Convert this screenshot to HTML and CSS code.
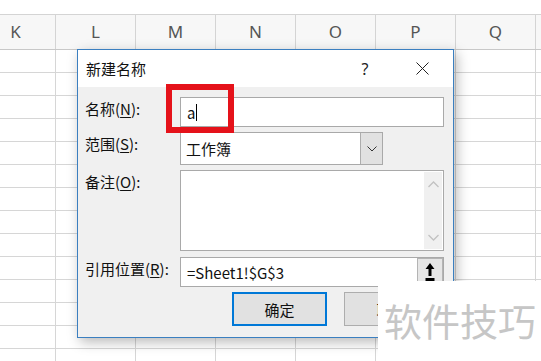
FILE: index.html
```html
<!DOCTYPE html>
<html lang="zh-CN">
<head>
    <meta charset="UTF-8">
    <title>新建名称</title>
    <link rel="stylesheet" href="styles.css">
</head>
<body>
    <div class="sheet">
        <div class="top-band"></div>
        <div class="col-head">
            <div class="col">K</div>
            <div class="col">L</div>
            <div class="col">M</div>
            <div class="col">N</div>
            <div class="col">O</div>
            <div class="col">P</div>
            <div class="col">Q</div>
            <div class="col"></div>
        </div>
        <div class="grid"></div>
    </div>

    <div class="dialog">
        <div class="title-bar">
            <span class="title">新建名称</span>
            <span class="help">?</span>
            <span class="close">
                <svg width="13" height="13" viewBox="0 0 13 13"><path d="M0.5 0.5L12.5 12.5M12.5 0.5L0.5 12.5" stroke="#222" stroke-width="1" fill="none"/></svg>
            </span>
        </div>
        <div class="dialog-body">
            <div class="row row-name">
                <label>名称(<u>N</u>):</label>
                <div class="field input">a<span class="caret"></span></div>
            </div>
            <div class="row row-scope">
                <label>范围(<u>S</u>):</label>
                <div class="field select">
                    <span class="select-text">工作簿</span>
                    <span class="drop-btn">
                        <svg width="10" height="6" viewBox="0 0 10 6"><path d="M0.5 0.5L5 5L9.5 0.5" stroke="#333" stroke-width="1" fill="none"/></svg>
                    </span>
                </div>
            </div>
            <div class="row row-comment">
                <label>备注(<u>O</u>):</label>
                <div class="field textarea">
                    <div class="scrollbar">
                        <svg width="11" height="7" viewBox="0 0 11 7"><path d="M0.5 6L5.5 1L10.5 6" stroke="#c2c2c2" stroke-width="1.3" fill="none"/></svg>
                        <svg width="11" height="7" viewBox="0 0 11 7"><path d="M0.5 1L5.5 6L10.5 1" stroke="#c2c2c2" stroke-width="1.3" fill="none"/></svg>
                    </div>
                </div>
            </div>
            <div class="row row-ref">
                <label>引用位置(<u>R</u>):</label>
                <div class="field input ref">
                    <span class="ref-text">=Sheet1!$G$3</span>
                    <span class="ref-btn">
                        <svg width="10" height="19" viewBox="0 0 10 19"><path d="M5 0L9.5 6H6.5V13H3.5V6H0.5Z" fill="#000"/><rect x="0.5" y="15" width="9" height="3" fill="#000"/></svg>
                    </span>
                </div>
            </div>
            <div class="buttons">
                <button class="btn btn-ok">确定</button>
                <button class="btn">取消</button>
            </div>
        </div>
    </div>

    <div class="highlight"></div>

    <div class="watermark">软件技巧</div>
</body>
</html>
```

FILE: styles.css
```css
html, body {
    margin: 0;
    padding: 0;
}
body {
    width: 541px;
    height: 361px;
    overflow: hidden;
    position: relative;
    background: #fff;
    font-family: "Noto Sans CJK SC", "Noto Sans", sans-serif;
}
.sheet {
    height: 361px;
    overflow: hidden;
}
.top-band {
    height: 14px;
    background: #fff;
}
.col-head {
    display: flex;
    margin-left: -24px;
    height: 36px;
    box-sizing: border-box;
    border-top: 1px solid #d4d4d4;
    border-bottom: 1px solid #c8c8c8;
    background: #f7f7f7;
}
.col {
    flex: 0 0 80px;
    box-sizing: border-box;
    border-right: 1px solid #d4d4d4;
    text-align: center;
    font-family: "Noto Sans", sans-serif;
    font-size: 17px;
    line-height: 34px;
    color: #555;
}
.grid {
    height: 311px;
    background-image:
        linear-gradient(to right, #d6d6d6 1px, transparent 1px),
        linear-gradient(to bottom, #d6d6d6 1px, transparent 1px);
    background-size: 80px 23px;
    background-position: 55px 22px;
}

/* dialog */
.dialog {
    position: absolute;
    left: 77px;
    top: 49px;
    width: 377px;
    height: 289px;
    box-sizing: border-box;
    border: 1px solid #3b7fc0;
    background: #f0f0f0;
    box-shadow: 3px 4px 12px rgba(0, 0, 0, 0.28);
    color: #111;
}
.title-bar {
    height: 37px;
    background: #fff;
    display: flex;
    align-items: center;
    padding-left: 8px;
    font-size: 15px;
}
.title {
    flex: 1;
}
.help {
    width: 20px;
    text-align: center;
    margin-right: 41px;
    font-family: "Noto Sans", sans-serif;
    font-size: 16px;
    color: #222;
}
.close {
    display: flex;
    margin-right: 24px;
}
.dialog-body {
    padding: 10px 9px 0 7px;
}
.row {
    display: flex;
    margin-bottom: 5px;
}
.row label {
    flex: 0 0 95px;
    font-size: 15px;
    line-height: 20px;
    padding-top: 2px;
}
.row label u {
    text-decoration-thickness: 1px;
    text-underline-offset: 2px;
}
.field {
    box-sizing: border-box;
    border: 1px solid #a9a9a9;
    background: #fff;
}
.input {
    flex: 1;
    height: 30px;
    display: flex;
    align-items: center;
    padding-left: 6px;
    font-size: 15px;
}
.caret {
    display: inline-block;
    width: 1px;
    height: 17px;
    background: #000;
    margin-left: 1px;
}
.select {
    width: 203px;
    height: 33px;
    display: flex;
    align-items: center;
    font-size: 15px;
}
.select-text {
    flex: 1;
    padding-left: 5px;
}
.drop-btn {
    width: 21px;
    height: 31px;
    background: #e1e1e1;
    border-left: 1px solid #adadad;
    display: flex;
    align-items: center;
    justify-content: center;
}
.row-comment {
    margin-bottom: 6px;
}
.textarea {
    flex: 1;
    height: 81px;
    display: flex;
    justify-content: flex-end;
    padding: 1px;
}
.scrollbar {
    width: 18px;
    background: #f0f0f0;
    display: flex;
    flex-direction: column;
    justify-content: space-between;
    align-items: center;
    padding: 9px 0 8px;
}
.ref {
    justify-content: space-between;
    padding-right: 0;
}
.ref-btn {
    width: 26px;
    height: 28px;
    box-sizing: border-box;
    background: #e6e6e6;
    border: 1px solid #b4b4b4;
    display: flex;
    align-items: center;
    justify-content: center;
}
.buttons {
    display: flex;
    justify-content: flex-end;
    gap: 17px;
    padding-right: 5px;
}
.btn {
    width: 95px;
    height: 34px;
    box-sizing: border-box;
    background: #e1e1e1;
    border: 1px solid #adadad;
    font-family: "Noto Sans CJK SC", sans-serif;
    font-size: 15px;
    color: #111;
    padding: 0;
}
.btn-ok {
    border: 2px solid #0078d7;
}

/* annotation overlays */
.highlight {
    position: absolute;
    left: 166px;
    top: 84px;
    width: 68px;
    height: 49px;
    box-sizing: border-box;
    border: 6px solid #e5121a;
}
.watermark {
    position: absolute;
    left: 378px;
    top: 281px;
    width: 163px;
    height: 80px;
    background: #fff;
    color: #c6c6c6;
    font-size: 38px;
    line-height: 78px;
    padding-left: 6px;
    box-sizing: border-box;
    white-space: nowrap;
}
```
